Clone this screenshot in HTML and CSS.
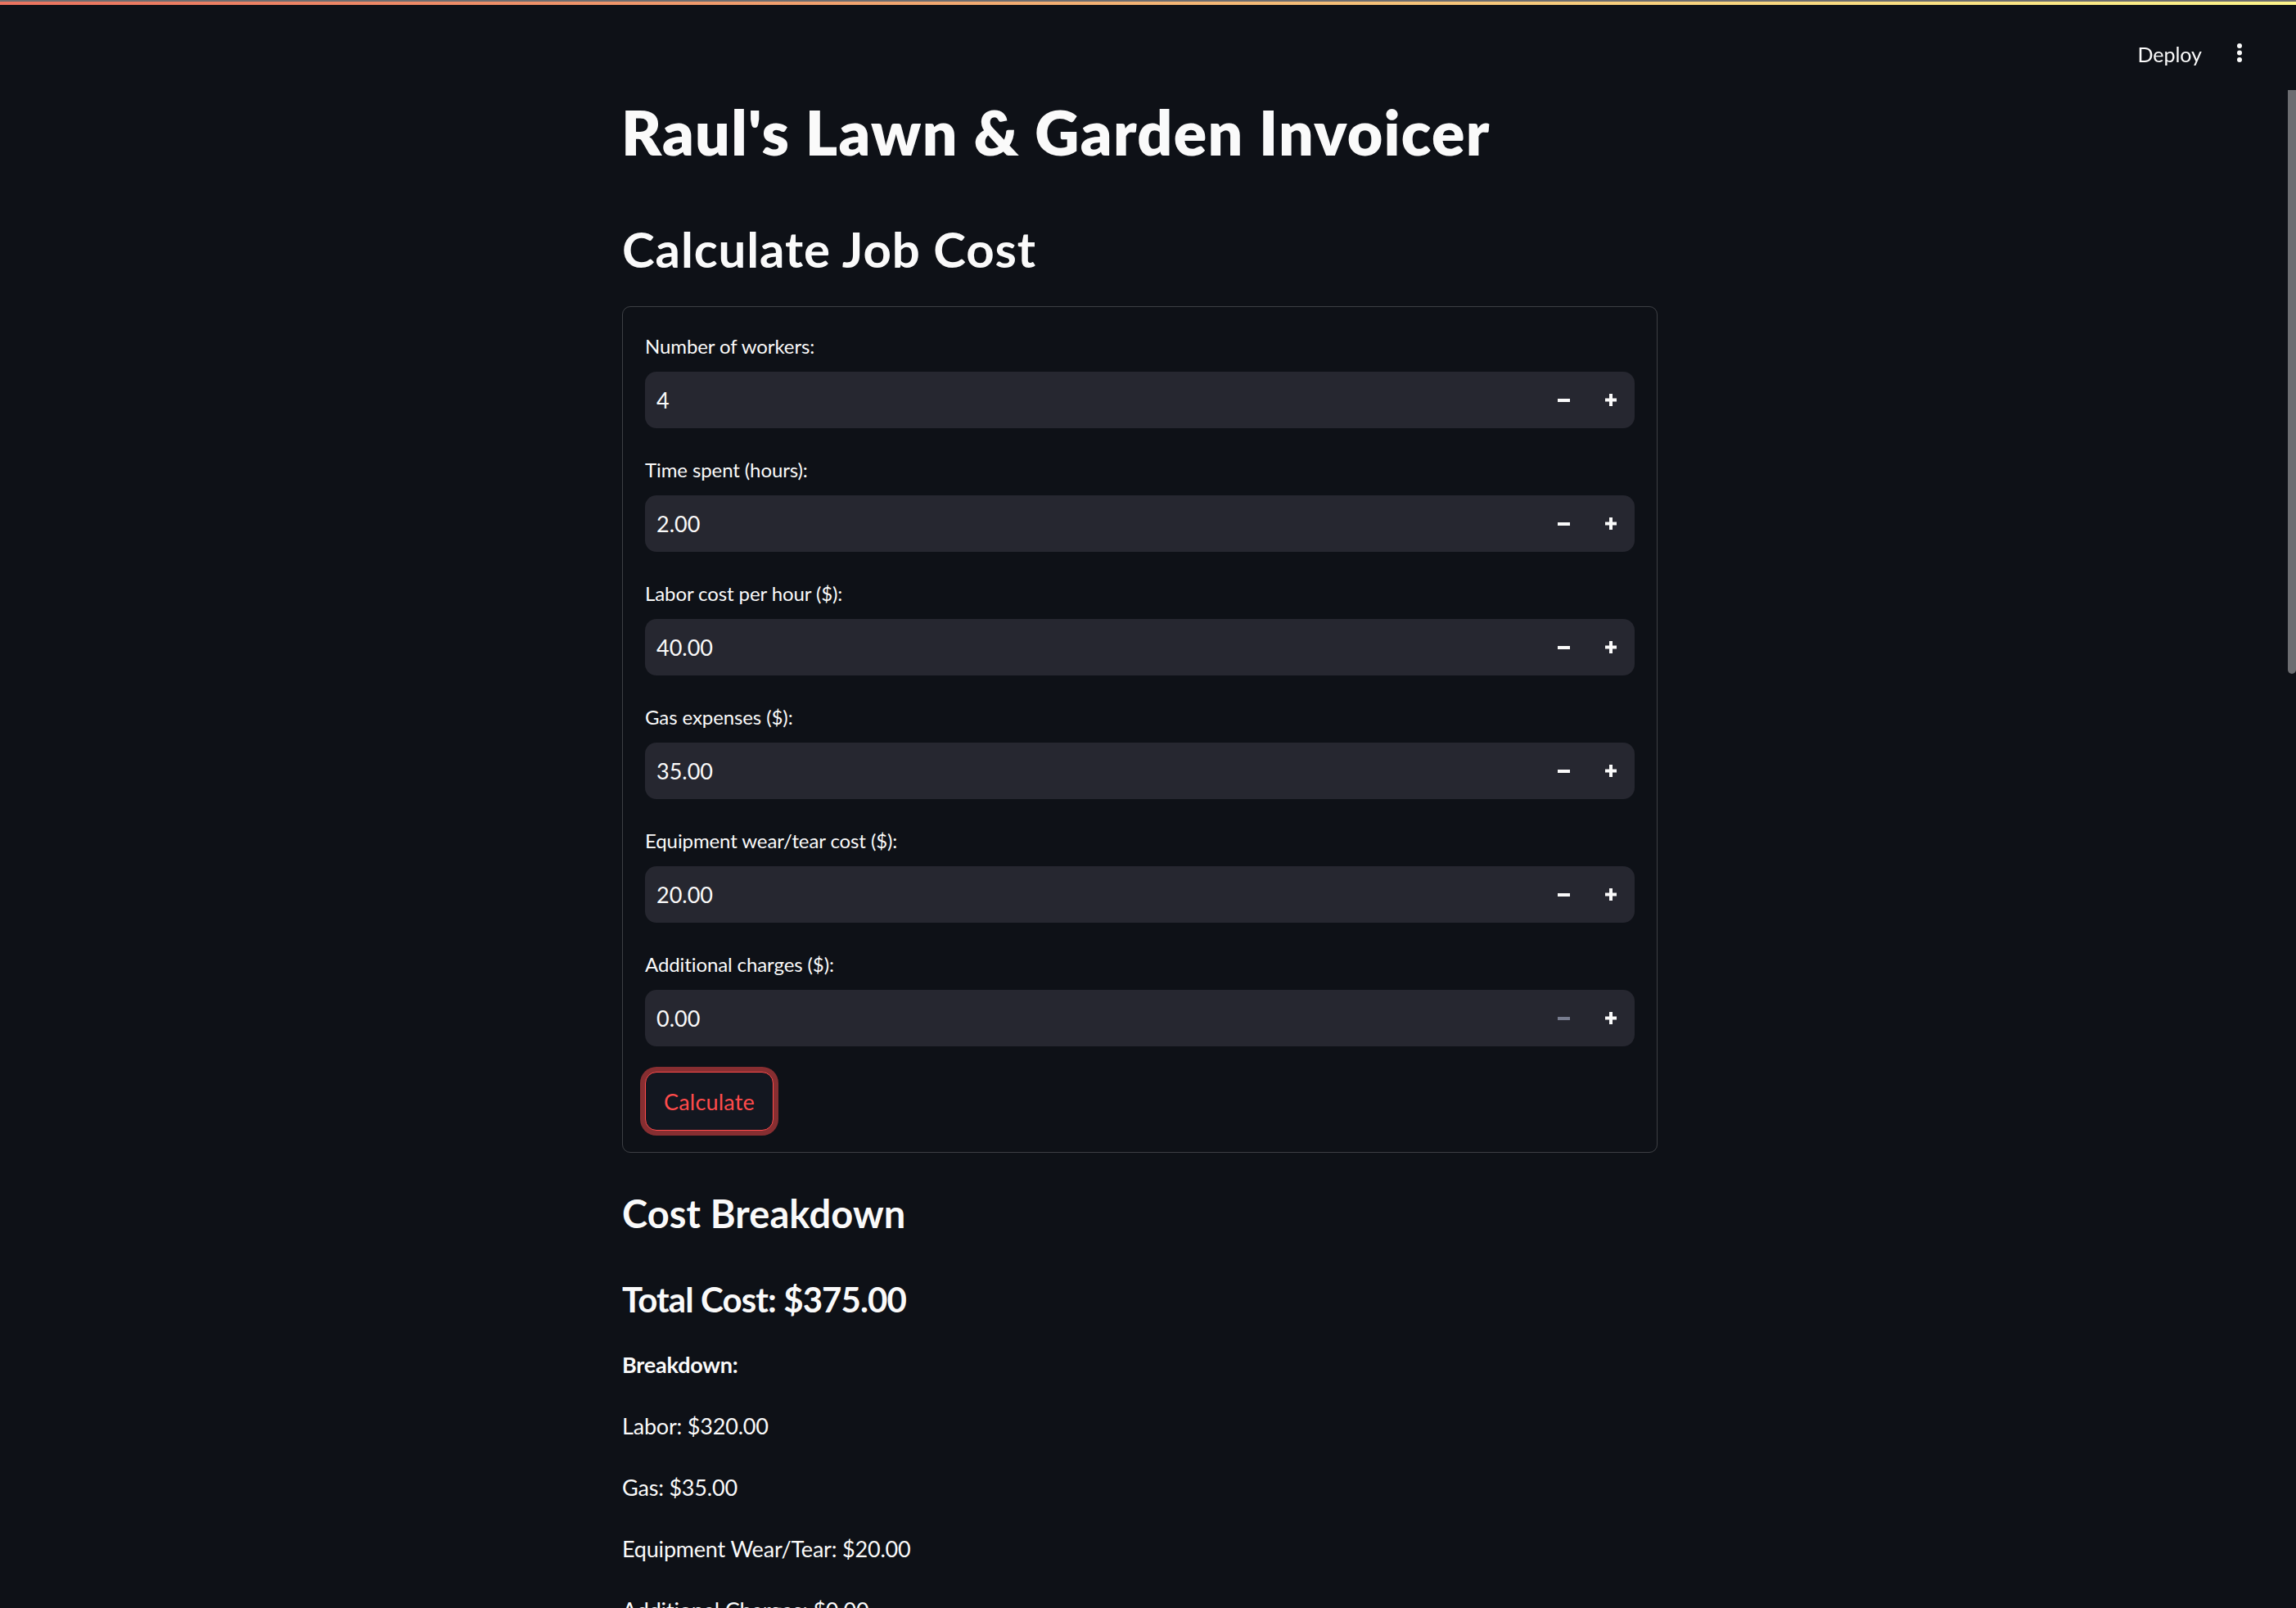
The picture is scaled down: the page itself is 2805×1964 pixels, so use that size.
FILE: index.html
```html
<!DOCTYPE html>
<html lang="en">
<head>
<meta charset="utf-8">
<title>Raul's Lawn &amp; Garden Invoicer</title>
<link rel="stylesheet" href="styles.css">
</head>
<body>
<div class="decoration"></div>
<header class="toolbar">
  <button class="deploy" type="button">Deploy</button>
  <button class="menu" type="button" aria-label="Main menu">
    <svg width="6" height="24" viewBox="0 0 6 24"><circle cx="3" cy="3" r="3"/><circle cx="3" cy="11.5" r="3"/><circle cx="3" cy="20" r="3"/></svg>
  </button>
</header>
<div class="scroll-thumb"></div>
<div class="app">
  <main class="block">
    <h1 class="title">Raul's Lawn &amp; Garden Invoicer</h1>
    <h2 class="header">Calculate Job Cost</h2>
    <form class="form">
      <div class="field">
        <label class="label">Number of workers:</label>
        <div class="num-input">
          <input class="num-value" type="text" value="4">
          <div class="steps">
            <button class="step" type="button"><svg width="15" height="14" viewBox="0 0 15 14"><rect x="0" y="5" width="15" height="4"/></svg></button>
            <button class="step" type="button"><svg width="14" height="15" viewBox="0 0 14 15"><rect x="0" y="5.5" width="14" height="4"/><rect x="5" y="0" width="4" height="15"/></svg></button>
          </div>
        </div>
      </div>
      <div class="field">
        <label class="label">Time spent (hours):</label>
        <div class="num-input">
          <input class="num-value" type="text" value="2.00">
          <div class="steps">
            <button class="step" type="button"><svg width="15" height="14" viewBox="0 0 15 14"><rect x="0" y="5" width="15" height="4"/></svg></button>
            <button class="step" type="button"><svg width="14" height="15" viewBox="0 0 14 15"><rect x="0" y="5.5" width="14" height="4"/><rect x="5" y="0" width="4" height="15"/></svg></button>
          </div>
        </div>
      </div>
      <div class="field">
        <label class="label">Labor cost per hour ($):</label>
        <div class="num-input">
          <input class="num-value" type="text" value="40.00">
          <div class="steps">
            <button class="step" type="button"><svg width="15" height="14" viewBox="0 0 15 14"><rect x="0" y="5" width="15" height="4"/></svg></button>
            <button class="step" type="button"><svg width="14" height="15" viewBox="0 0 14 15"><rect x="0" y="5.5" width="14" height="4"/><rect x="5" y="0" width="4" height="15"/></svg></button>
          </div>
        </div>
      </div>
      <div class="field">
        <label class="label">Gas expenses ($):</label>
        <div class="num-input">
          <input class="num-value" type="text" value="35.00">
          <div class="steps">
            <button class="step" type="button"><svg width="15" height="14" viewBox="0 0 15 14"><rect x="0" y="5" width="15" height="4"/></svg></button>
            <button class="step" type="button"><svg width="14" height="15" viewBox="0 0 14 15"><rect x="0" y="5.5" width="14" height="4"/><rect x="5" y="0" width="4" height="15"/></svg></button>
          </div>
        </div>
      </div>
      <div class="field">
        <label class="label">Equipment wear/tear cost ($):</label>
        <div class="num-input">
          <input class="num-value" type="text" value="20.00">
          <div class="steps">
            <button class="step" type="button"><svg width="15" height="14" viewBox="0 0 15 14"><rect x="0" y="5" width="15" height="4"/></svg></button>
            <button class="step" type="button"><svg width="14" height="15" viewBox="0 0 14 15"><rect x="0" y="5.5" width="14" height="4"/><rect x="5" y="0" width="4" height="15"/></svg></button>
          </div>
        </div>
      </div>
      <div class="field">
        <label class="label">Additional charges ($):</label>
        <div class="num-input">
          <input class="num-value" type="text" value="0.00">
          <div class="steps">
            <button class="step step-disabled" type="button" disabled><svg width="15" height="14" viewBox="0 0 15 14"><rect x="0" y="5" width="15" height="4"/></svg></button>
            <button class="step" type="button"><svg width="14" height="15" viewBox="0 0 14 15"><rect x="0" y="5.5" width="14" height="4"/><rect x="5" y="0" width="4" height="15"/></svg></button>
          </div>
        </div>
      </div>
      <div class="actions">
        <button class="submit" type="button">Calculate</button>
      </div>
    </form>
    <h3 class="subheader">Cost Breakdown</h3>
    <h4 class="total">Total Cost: $375.00</h4>
    <div class="lines">
      <p class="line"><strong>Breakdown:</strong></p>
      <p class="line">Labor: $320.00</p>
      <p class="line">Gas: $35.00</p>
      <p class="line">Equipment Wear/Tear: $20.00</p>
      <p class="line">Additional Charges: $0.00</p>
    </div>
  </main>
</div>
</body>
</html>
```

FILE: styles.css
```css
* { box-sizing: border-box; }

html, body {
  margin: 0;
  padding: 0;
  background: #0e1117;
  height: 100%;
  overflow: hidden;
}

body {
  font-family: Lato, "Source Sans Pro", "Noto Sans", sans-serif;
  color: #fafafa;
}

.decoration {
  position: fixed;
  top: 0;
  left: 0;
  right: 0;
  height: 6px;
  border-top: 2px solid #6d6d70;
  background: linear-gradient(90deg, #ea735f, #fdf58a);
  z-index: 10;
}

.toolbar {
  position: fixed;
  top: 6px;
  right: 0;
  height: 120px;
  display: flex;
  align-items: flex-start;
  padding-top: 42px;
  padding-right: 66px;
  gap: 43px;
  z-index: 5;
}

.deploy {
  background: none;
  border: none;
  color: #fafafa;
  font-family: inherit;
  font-size: 25px;
  line-height: 36px;
  padding: 0;
  margin-top: 0;
}

.menu {
  background: none;
  border: none;
  padding: 0;
  margin-top: 5px;
  fill: #fafafa;
  display: flex;
}

.scroll-thumb {
  position: fixed;
  top: 110px;
  right: 0;
  width: 10px;
  height: 713px;
  background: #6c6d71;
  border-radius: 0 0 5px 5px;
}

.app {
  display: flex;
  justify-content: center;
  padding-right: 20px;
}

.block {
  width: 1265px;
  padding-top: 118px;
  display: flex;
  flex-direction: column;
}

.title {
  margin: 0;
  font-size: 75px;
  line-height: 86px;
  font-weight: 800;
  letter-spacing: 1.3px;
  margin-left: -1px;
}

.header {
  margin: 64px 0 0;
  font-size: 60px;
  line-height: 72px;
  font-weight: 700;
  letter-spacing: 0.9px;
}

.form {
  margin-top: 34px;
  border: 1px solid rgba(250, 250, 250, 0.2);
  border-radius: 10px;
  padding: 28px 27px 26px;
  display: flex;
  flex-direction: column;
  gap: 31px;
}

.field {
  display: flex;
  flex-direction: column;
}

.label {
  font-size: 24px;
  line-height: 40px;
  height: 40px;
  margin-bottom: 11px;
  letter-spacing: -0.1px;
}

.num-input {
  display: flex;
  height: 69px;
  background: #262730;
  border-radius: 14px;
  overflow: hidden;
}

.num-value {
  flex: 1;
  min-width: 0;
  background: transparent;
  border: none;
  outline: none;
  color: #fafafa;
  font-family: inherit;
  font-size: 27px;
  padding: 0 14px;
  height: 69px;
}

.steps {
  display: flex;
  width: 115px;
}

.step {
  flex: 1;
  background: transparent;
  border: none;
  padding: 0;
  display: flex;
  align-items: center;
  justify-content: center;
  fill: #fafafa;
}

.step-disabled {
  fill: #777c8e;
}

.actions {
  display: flex;
}

.submit {
  height: 72px;
  padding: 0 22px;
  background: #131720;
  border: 1px solid #ff4b4b;
  border-radius: 14px;
  color: #ff4b4b;
  font-family: inherit;
  font-size: 27px;
  letter-spacing: 0.2px;
  box-shadow: 0 0 0 6px rgba(255, 75, 75, 0.5);
}

.subheader {
  margin: 46px 0 0;
  font-size: 47px;
  line-height: 57px;
  font-weight: 700;
  letter-spacing: 0.1px;
}

.total {
  margin: 51px 0 0;
  font-size: 42px;
  line-height: 50px;
  font-weight: 700;
  letter-spacing: -0.9px;
}

.lines {
  margin-top: 32px;
  display: flex;
  flex-direction: column;
  gap: 29px;
}

.line {
  margin: 0;
  font-size: 27px;
  line-height: 46px;
  letter-spacing: -0.2px;
}

.line strong {
  font-weight: 700;
}
```
